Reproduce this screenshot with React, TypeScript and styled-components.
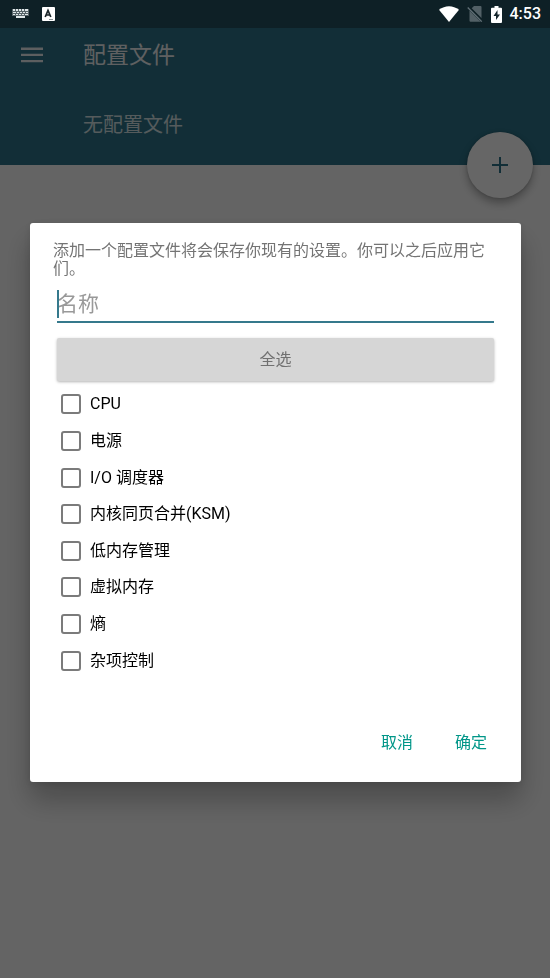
import React from 'react';
import styled, { createGlobalStyle } from 'styled-components';

const GlobalStyle = createGlobalStyle`
  * { box-sizing: border-box; }
  body {
    margin: 0;
    background: #fafafa;
    font-family: Roboto, "Noto Sans CJK SC", sans-serif;
  }
  button, input { font: inherit; }
`;

const Screen = styled.div`
  min-height: 100vh;
  display: flex;
  flex-direction: column;
`;

const StatusBar = styled.div`
  position: sticky;
  top: 0;
  z-index: 3;
  height: 28px;
  padding: 0 9px 0 12px;
  display: flex;
  align-items: center;
  justify-content: space-between;
  background: #0e2026;
  color: #fff;
`;

const StatusGroup = styled.div<{ $gap: number }>`
  display: flex;
  align-items: center;
  gap: ${({ $gap }) => $gap}px;
`;

const Clock = styled.time`
  font-size: 16px;
  line-height: 20px;
  font-weight: 500;
`;

const Header = styled.header`
  position: relative;
  height: 137px;
  background: #2d7389;
  color: #fff;
`;

const Toolbar = styled.div`
  height: 56px;
  padding-left: 21px;
  display: flex;
  align-items: center;
  gap: 40px;
`;

const MenuButton = styled.button`
  width: 22px;
  height: 22px;
  padding: 0;
  border: 0;
  background: none;
  color: #e8eef0;
`;

const Title = styled.h1`
  margin: 0;
  font-size: 23px;
  line-height: 30px;
  font-weight: 400;
  color: #edf1f2;
`;

const Subtitle = styled.p`
  margin: 0;
  padding: 26px 0 0 83px;
  font-size: 20px;
  line-height: 30px;
  color: #d5e3e7;
`;

const Fab = styled.button`
  position: absolute;
  right: 17px;
  bottom: -33px;
  width: 66px;
  height: 66px;
  padding: 0;
  display: flex;
  align-items: center;
  justify-content: center;
  border: 0;
  border-radius: 50%;
  background: #fff;
  color: #2d7389;
  box-shadow: 0 5px 8px rgba(0, 0, 0, 0.3), 0 0 3px rgba(0, 0, 0, 0.2);
`;

const Scrim = styled.div`
  position: fixed;
  inset: 0;
  z-index: 2;
  padding: 27px 29px 0 30px;
  display: flex;
  align-items: center;
  background: rgba(0, 0, 0, 0.6);
`;

const Dialog = styled.form`
  width: 100%;
  padding: 19px 22px 22px 23px;
  border-radius: 3px;
  background: #fff;
  box-shadow: 0 18px 28px rgba(0, 0, 0, 0.26), 0 2px 10px rgba(0, 0, 0, 0.12);
`;

const Message = styled.p`
  margin: 0;
  font-size: 16px;
  line-height: 18px;
  color: #747474;
`;

const Fields = styled.div`
  padding: 9px 5px 0 4px;
`;

const NameField = styled.label`
  position: relative;
  display: block;
`;

const NameInput = styled.input`
  display: block;
  width: 100%;
  height: 36px;
  padding: 0;
  border: 0;
  border-bottom: 2px solid #35798c;
  border-radius: 0;
  outline: 0;
  background: none;
  font-size: 21px;
  caret-color: transparent;
  &::placeholder { color: #999; opacity: 1; }
`;

const Caret = styled.span`
  position: absolute;
  left: 0;
  top: 3px;
  width: 2px;
  height: 28px;
  background: #35798c;
`;

const SelectAll = styled.button`
  display: block;
  width: 100%;
  height: 43px;
  margin: 15px 0 5px;
  padding: 0 0 4px;
  border: 0;
  border-radius: 2px;
  background: #d6d6d6;
  box-shadow: 0 1px 3px rgba(0, 0, 0, 0.3);
  font-size: 16px;
  color: #707070;
`;

const Options = styled.div`
  height: 293px;
  padding-left: 4px;
  display: grid;
  grid-auto-rows: 1fr;
`;

const Option = styled.label`
  display: flex;
  align-items: center;
  gap: 9px;
  font-size: 16px;
  line-height: 24px;
  color: #000;
`;

const Checkbox = styled.input`
  appearance: none;
  flex: none;
  width: 20px;
  height: 20px;
  margin: 0;
  border: 2px solid #7b7b7b;
  border-radius: 3px;
  background: #fff;
  &:checked { background: #35798c; }
`;

const Actions = styled.div`
  margin-top: 45px;
  display: flex;
  justify-content: flex-end;
  gap: 18px;
`;

const Action = styled.button`
  height: 36px;
  padding: 0 12px 2px;
  border: 0;
  background: none;
  font-size: 16px;
  color: #009688;
`;

const options = ['CPU', '电源', 'I/O 调度器', '内核同页合并(KSM)', '低内存管理', '虚拟内存', '熵', '杂项控制'];

const KeyboardIcon = () => (
  <svg width="17" height="10" viewBox="0 0 17 10" fill="#dfe6e8" aria-hidden="true">
    <path d="M1 0h2v2H1zM4 0h2v2H4zM7 0h2v2H7zM10 0h2v2h-2zM13 0h3v2h-3zM1 3h3v1H1zM5 3h2v1H5zM8 3h2v1H8zM11 3h2v1h-2zM14 3h2v1h-2zM1 5h2v1H1zM4 5h2v1H4zM7 5h2v1H7zM10 5h2v1h-2zM13 5h3v1h-3zM4 7h9v2H4z" />
    <path d="M0 0h17v7H0z" opacity=".35" />
  </svg>
);

const LanguageIcon = () => (
  <svg width="13" height="14" viewBox="0 0 13 14" aria-hidden="true">
    <rect width="13" height="14" rx="1" fill="#fff" />
    <path d="M3.2 10 6 3.5 8.8 10M4.2 8h3.7" fill="none" stroke="#1b262a" strokeWidth="1.7" />
    <path d="M7 12.5h4" stroke="#8b9497" />
  </svg>
);

const WifiIcon = () => (
  <svg width="20" height="16" viewBox="0 0 20 16" aria-hidden="true">
    <path d="M0 3.7C6 -1 14 -1 20 3.7L10 16z" fill="#fff" />
  </svg>
);

const NoSimIcon = () => (
  <svg width="16" height="16" viewBox="0 0 16 16" aria-hidden="true">
    <path d="M7 0h6.500q1 0 1 1v11L4.700 2.300zM2.500 4.500 13.700 15.700H3.500q-1 0-1-1z" fill="#526066" />
    <path d="M.7 1.500 14.800 15.600" stroke="#627077" strokeWidth="1.300" />
  </svg>
);

const BatteryIcon = () => (
  <svg width="11" height="17" viewBox="0 0 11 17" aria-hidden="true">
    <path d="M3.500 0h4v1.700H10q1 0 1 1V16q0 1-1 1H1q-1 0-1-1V2.700q0-1 1-1h2.500z" fill="#fff" />
    <path d="M6.500 4 2.500 10h2.500v4L9 8.500H6.500z" fill="#14252b" />
  </svg>
);

export default function App() {
  return (
    <>
      <GlobalStyle />
      <Screen>
        <StatusBar>
          <StatusGroup $gap={13}>
            <KeyboardIcon />
            <LanguageIcon />
          </StatusGroup>
          <StatusGroup $gap={8}>
            <WifiIcon />
            <NoSimIcon />
            <BatteryIcon />
            <Clock>4:53</Clock>
          </StatusGroup>
        </StatusBar>
        <Header>
          <Toolbar>
            <MenuButton type="button" aria-label="菜单">
              <svg width="22" height="22" viewBox="0 0 22 22" aria-hidden="true">
                <path d="M0 3.700h22M0 9.900h22M0 16.100h22" stroke="currentColor" strokeWidth="2.400" />
              </svg>
            </MenuButton>
            <Title>配置文件</Title>
          </Toolbar>
          <Subtitle>无配置文件</Subtitle>
          <Fab type="button" aria-label="添加">
            <svg width="16" height="16" viewBox="0 0 16 16" aria-hidden="true">
              <path d="M8 0v16M0 8h16" stroke="currentColor" strokeWidth="2" />
            </svg>
          </Fab>
        </Header>
      </Screen>
      <Scrim>
        <Dialog role="dialog" aria-modal="true" onSubmit={(e: React.FormEvent) => e.preventDefault()}>
          <Message>添加一个配置文件将会保存你现有的设置。你可以之后应用它们。</Message>
          <Fields>
            <NameField>
              <NameInput type="text" placeholder="名称" aria-label="名称" />
              <Caret />
            </NameField>
            <SelectAll type="button">全选</SelectAll>
            <Options>
              {options.map((name) => (
                <Option key={name}>
                  <Checkbox type="checkbox" />
                  {name}
                </Option>
              ))}
            </Options>
          </Fields>
          <Actions>
            <Action type="button">取消</Action>
            <Action type="submit">确定</Action>
          </Actions>
        </Dialog>
      </Scrim>
    </>
  );
}
